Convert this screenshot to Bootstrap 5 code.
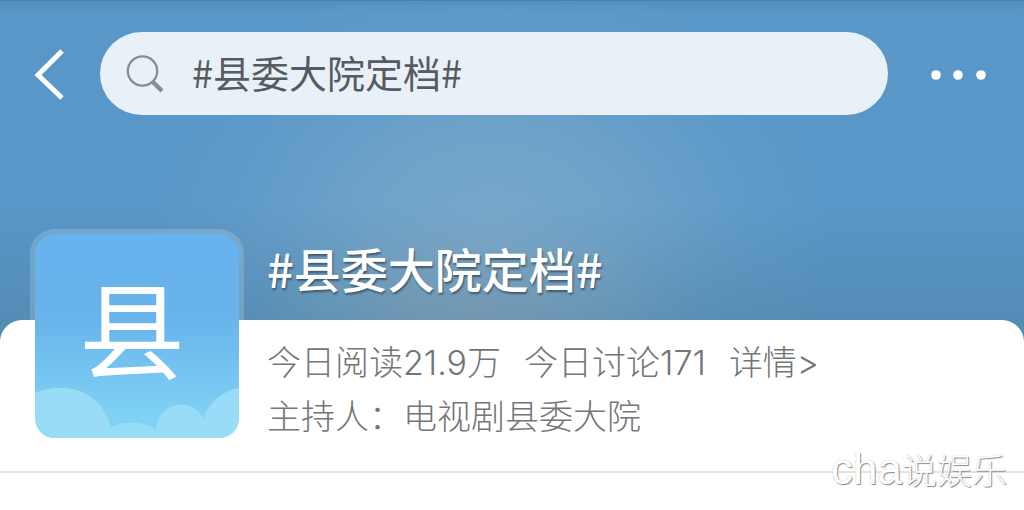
<!DOCTYPE html>
<html lang="zh-CN">
<head>
<meta charset="utf-8">
<meta name="viewport" content="width=device-width, initial-scale=1">
<title>#县委大院定档#</title>
<link href="https://cdn.jsdelivr.net/npm/bootstrap@5.3.0/dist/css/bootstrap.min.css" rel="stylesheet">
<style>
  body { font-family: "Noto Sans CJK SC", sans-serif; background: #fff; }
  .hero, .sheet { --corner: 22px; }
  .hero {
    padding: 32px 36px calc(205px + var(--corner)) 34px;
    box-shadow: inset 0 1px #4a7fab;
    background:
      linear-gradient(to bottom, rgba(72,118,150,.25) 0, rgba(72,118,150,0) 12px),
      linear-gradient(to bottom, rgba(76,124,152,0) 60%, rgba(76,124,152,.4) 94%),
      radial-gradient(ellipse 220px 110px at 46% 94%, rgba(176,176,176,.4), rgba(176,176,176,0)),
      radial-gradient(ellipse 340px 270px at 48% 70%, rgba(150,184,206,.5), rgba(150,184,206,.38) 35%, rgba(150,184,206,.1) 75%, rgba(150,184,206,0)),
      #5997c8;
  }
  .icon-btn { line-height: 0; }
  .search-pill { height: 83px; margin: 0 43px 0 36px; padding: 0 26px; gap: 28px; background: #e9f1f8; }
  .search-pill input { font-size: 38px; line-height: 56px; padding: 0 0 4px; color: #565b61; }
  .search-pill input:focus { outline: 0; }
  .sheet { margin-top: calc(0px - var(--corner)); border-radius: var(--corner) var(--corner) 0 0; padding: 0 35px 27px; }
  .sheet-rule { height: 2px; background: #e2e3e5; }
  .profile { gap: 28px; margin-top: -86px; }
  .avatar { width: 204px; height: 204px; border-radius: 20px; box-shadow: 0 0 0 5px rgba(255,255,255,.17); }
  .avatar svg { border-radius: 20px; }
  .topic-title { height: 86px; font-size: 47px; font-weight: 500; line-height: 68px; text-shadow: 1px 2px 2px rgba(50,70,90,.75); }
  .topic-info { padding-top: 16px; font-family: Inter, "Noto Sans CJK SC", sans-serif; font-weight: 300; font-size: 34px; line-height: 54px; color: #737578; }
  .stats { column-gap: 23px; }
  .watermark { right: 17px; bottom: -24px; line-height: 56px; font-size: 35px; font-weight: 300; color: #fff; text-shadow: 1px 1px 1px #85898c, 0 0 1px #b5b8ba; }
  .watermark span { font-family: "Liberation Sans", sans-serif; font-size: 44px; }
</style>
</head>
<body class="min-vh-100">
<header class="hero">
  <div class="d-flex align-items-center">
    <button class="icon-btn btn p-0 border-0" type="button" aria-label="返回">
      <svg width="30" height="52" viewBox="0 0 30 52" fill="none" stroke="#fff" stroke-width="5"><path d="M28 3 4 27 28 50"/></svg>
    </button>
    <label class="search-pill d-flex align-items-center flex-grow-1 rounded-pill">
      <svg class="flex-shrink-0" width="38" height="38" viewBox="0 0 38 38" fill="none" stroke="#888d91"><circle cx="16.500" cy="16" r="14.700" stroke-width="2.300"/><path d="m27 27 9 9" stroke-width="4.500"/></svg>
      <input class="border-0 bg-transparent w-100" type="text" value="#县委大院定档#" aria-label="搜索">
    </label>
    <button class="icon-btn btn p-0 border-0" type="button" aria-label="更多">
      <svg width="57" height="12" viewBox="0 0 57 12" fill="#fff"><circle cx="5" cy="7" r="4.800"/><circle cx="27" cy="7" r="4.800"/><circle cx="50" cy="7" r="4.800"/></svg>
    </button>
  </div>
</header>
<main class="position-relative">
  <section class="sheet d-flex flex-column bg-white">
    <div class="profile d-flex">
      <div class="avatar flex-shrink-0">
        <svg class="d-block" width="204" height="204" viewBox="0 0 204 204" role="img" aria-label="县">
          <defs><linearGradient id="sky" x1="0" y1="0" x2="0" y2="1"><stop offset="0" stop-color="#68b3ee"/><stop offset=".4" stop-color="#68b3eb"/><stop offset=".85" stop-color="#7dcff4"/><stop offset="1" stop-color="#83d5f6"/></linearGradient></defs>
          <rect width="204" height="204" fill="url(#sky)"/>
          <path d="M0 159C24 148 65 152 76 193C88 187 110 187 121 196C123 167 158 162 168 185C176 164 192 156 204 154V204H0Z" fill="#98dcf8"/>
          <text x="97" y="137" text-anchor="middle" font-size="106" fill="#fff">县</text>
        </svg>
      </div>
      <div class="flex-grow-1">
        <h1 class="topic-title text-white m-0">#县委大院定档#</h1>
        <div class="topic-info">
          <div class="stats d-flex flex-wrap">
            <span>今日阅读21.9万</span>
            <span>今日讨论171</span>
            <a class="text-reset text-decoration-none" href="#">详情&gt;</a>
          </div>
          <div>主持人：电视剧县委大院</div>
        </div>
      </div>
    </div>
  </section>
  <div class="sheet-rule"></div>
  <div class="watermark position-absolute"><span>cha</span>说娱乐</div>
</main>
<script src="https://cdn.jsdelivr.net/npm/bootstrap@5.3.0/dist/js/bootstrap.bundle.min.js"></script>
</body>
</html>
